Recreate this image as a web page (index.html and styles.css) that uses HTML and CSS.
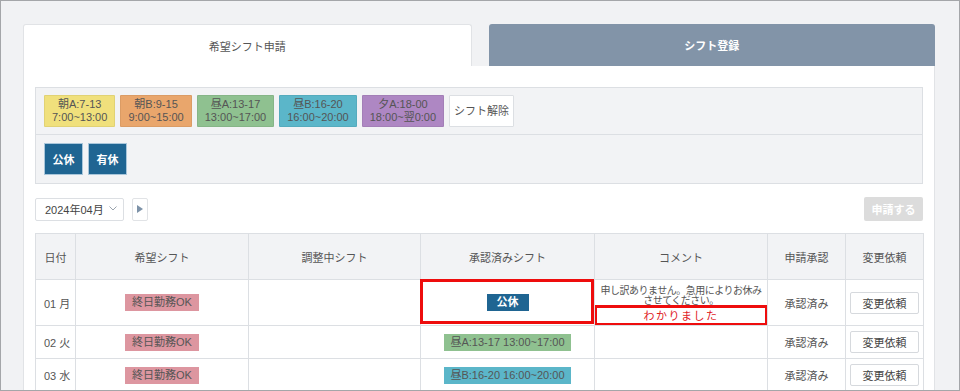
FILE: index.html
```html
<!DOCTYPE html>
<html lang="ja">
<head>
    <meta charset="UTF-8">
    <title>希望シフト申請</title>

    <link rel="stylesheet" href="styles.css">
</head>
<body>

<div class="frame">
    <div class="tabs">
        <div class="tab tab-active">希望シフト申請</div>
        <div class="tab tab-other">シフト登録</div>
    </div>

    <div class="panel">
        <div class="shift-box">
            <div class="shift-row">
                <button class="shift-btn shift-yellow">朝A:7-13<br>7:00~13:00</button>
                <button class="shift-btn shift-orange">朝B:9-15<br>9:00~15:00</button>
                <button class="shift-btn shift-green">昼A:13-17<br>13:00~17:00</button>
                <button class="shift-btn shift-blue">昼B:16-20<br>16:00~20:00</button>
                <button class="shift-btn shift-purple">夕A:18-00<br>18:00~翌0:00</button>
                <button class="shift-btn shift-clear">シフト解除</button>
            </div>
            <div class="shift-row shift-row-off">
                <button class="off-btn">公休</button>
                <button class="off-btn">有休</button>
            </div>
        </div>

        <div class="toolbar">
            <div class="month-select">
                <span>2024年04月</span>
                <svg class="chevron" width="8" height="5" viewBox="0 0 8 5">
                    <path d="M0.5 0.5 L4 4 L7.5 0.5" fill="none" stroke="#9aa3ad" stroke-width="1"/>
                </svg>
            </div>
            <button class="next-btn">
                <svg width="6" height="8" viewBox="0 0 6 8">
                    <path d="M0 0 L6 4 L0 8 Z" fill="#7d92a8"/>
                </svg>
            </button>
            <button class="submit-btn" disabled>申請する</button>
        </div>

        <table class="shift-table">
            <colgroup>
                <col style="width: 40px">
                <col style="width: 173px">
                <col style="width: 172px">
                <col style="width: 174px">
                <col style="width: 173px">
                <col style="width: 78px">
                <col style="width: 78px">
            </colgroup>
            <thead>
            <tr>
                <th>日付</th>
                <th>希望シフト</th>
                <th>調整中シフト</th>
                <th>承認済みシフト</th>
                <th>コメント</th>
                <th>申請承認</th>
                <th>変更依頼</th>
            </tr>
            </thead>
            <tbody>
            <tr class="row-tall">
                <td class="date">01 月</td>
                <td><span class="tag tag-pink">終日勤務OK</span></td>
                <td></td>
                <td class="marked"><span class="tag tag-off">公休</span></td>
                <td class="comment">
                    <p class="comment-text">申し訳ありません。急用によりお休み<br>させてください。</p>
                    <p class="reply">わかりました</p>
                </td>
                <td>承認済み</td>
                <td><button class="change-btn">変更依頼</button></td>
            </tr>
            <tr>
                <td class="date">02 火</td>
                <td><span class="tag tag-pink">終日勤務OK</span></td>
                <td></td>
                <td><span class="tag tag-wide shift-green">昼A:13-17 13:00~17:00</span></td>
                <td></td>
                <td>承認済み</td>
                <td><button class="change-btn">変更依頼</button></td>
            </tr>
            <tr>
                <td class="date">03 水</td>
                <td><span class="tag tag-pink">終日勤務OK</span></td>
                <td></td>
                <td><span class="tag tag-wide shift-blue">昼B:16-20 16:00~20:00</span></td>
                <td></td>
                <td>承認済み</td>
                <td><button class="change-btn">変更依頼</button></td>
            </tr>
            </tbody>
        </table>
    </div>
</div>

</body>
</html>
```

FILE: styles.css
```css
body {
    margin: 0;
    font: 11px "Liberation Sans", "Noto Sans CJK JP", sans-serif;
    color: #555;
}

button {
    font: inherit;
    color: inherit;
    cursor: pointer;
}

.frame {
    box-sizing: border-box;
    width: 960px;
    height: 391px;
    border: 1px solid #a4a6a9;
    background: #f1f2f4;
    padding: 23px 24px 0 22px;
    overflow: hidden;
}

.tabs {
    display: flex;
    gap: 17px;
}

.tab {
    flex: 1;
    height: 42px;
    display: flex;
    align-items: center;
    justify-content: center;
    border-radius: 3px 3px 0 0;
    box-sizing: border-box;
}

.tab-active {
    background: #fff;
    border: 1px solid #e1e3e6;
    border-bottom: 0;
    color: #555;
}

.tab-other {
    background: #8294a8;
    color: #fff;
    font-weight: bold;
}

.panel {
    background: #fff;
    border-left: 1px solid #e1e3e6;
    border-right: 1px solid #e1e3e6;
    padding: 21px 11px 0;
    height: 400px;
}

.shift-box {
    border: 1px solid #dcdfe3;
    background: #f2f3f5;
}

.shift-row {
    display: flex;
    gap: 5px;
    padding: 7px 8px;
}

.shift-row-off {
    border-top: 1px solid #dcdfe3;
    padding: 8px;
}

.shift-btn {
    height: 32px;
    padding: 0 7px;
    border: 1px solid rgba(0, 0, 0, 0.06);
    border-radius: 1px;
    line-height: 13px;
    color: #555;
}

.shift-yellow { background: #f0e07c; }
.shift-orange { background: #e9a66c; }
.shift-green { background: #8fc190; }
.shift-blue { background: #5bb6c9; }
.shift-purple { background: #ae87c3; }

.shift-clear {
    background: #fff;
    border-color: #dcdfe3;
    padding: 0 4px;
}

.off-btn {
    width: 39px;
    height: 32px;
    padding: 0;
    border: 1px solid #a9c6da;
    background: #1f6592;
    color: #fff;
    font-weight: bold;
}

.toolbar {
    display: flex;
    align-items: center;
    gap: 8px;
    margin: 13px 0 12px;
}

.month-select {
    box-sizing: border-box;
    width: 89px;
    height: 23px;
    display: flex;
    align-items: center;
    justify-content: space-between;
    padding: 0 6px 0 9px;
    border: 1px solid #dcdfe3;
    border-radius: 2px;
    background: #fff;
    color: #444;
    white-space: nowrap;
}

.chevron {
    margin-bottom: 2px;
}

.next-btn {
    box-sizing: border-box;
    width: 16px;
    height: 23px;
    padding: 0;
    border: 1px solid #e1e3e6;
    border-radius: 2px;
    background: #fff;
    display: flex;
    align-items: center;
    justify-content: center;
}

.submit-btn {
    margin-left: auto;
    width: 59px;
    height: 24px;
    border: 0;
    border-radius: 2px;
    background: #dcdcdc;
    color: #fff;
    font-weight: bold;
}

.shift-table {
    width: 888px;
    border-collapse: collapse;
    table-layout: fixed;
}

.shift-table th,
.shift-table td {
    border: 1px solid #dcdfe3;
    text-align: center;
    vertical-align: middle;
    padding: 0;
    height: 32px;
}

.shift-table th {
    height: 45px;
    background: #f2f3f5;
    font-weight: normal;
    color: #555;
}

.row-tall td {
    height: 45px;
}

.shift-table td.date {
    text-align: left;
    padding-left: 8px;
}

.tag {
    display: inline-block;
    height: 17px;
    line-height: 17px;
    padding: 0 7px;
    color: #555;
}

.tag-pink {
    background: #dd96a0;
}

.tag-off {
    background: #1f6592;
    color: #fff;
    font-weight: bold;
    padding: 0 10px;
}

.tag-wide {
    width: 127px;
    padding: 0;
    box-sizing: border-box;
}

.marked {
    position: relative;
}

.marked::after {
    content: "";
    position: absolute;
    top: -1px;
    left: -1px;
    right: 0;
    bottom: 1px;
    border: 3px solid #ee0d0d;
}

.shift-table td.comment {
    vertical-align: top;
    height: 40px;
    padding-top: 5px;
    font-family: "Noto Sans CJK JP", sans-serif;
}

.comment-text {
    margin: 0;
    height: 20px;
    font-size: 10px;
    line-height: 10px;
    letter-spacing: -0.5px;
}

.reply {
    box-sizing: border-box;
    height: 21px;
    margin: 0 -1px -1px;
    border: 3px solid #ee0d0d;
    line-height: 15px;
    color: #e0201e;
    letter-spacing: 1.5px;
}

.change-btn {
    width: 69px;
    height: 22px;
    padding: 0;
    border: 1px solid #d6d9dd;
    border-radius: 2px;
    background: #fff;
    color: #444;
}
```
